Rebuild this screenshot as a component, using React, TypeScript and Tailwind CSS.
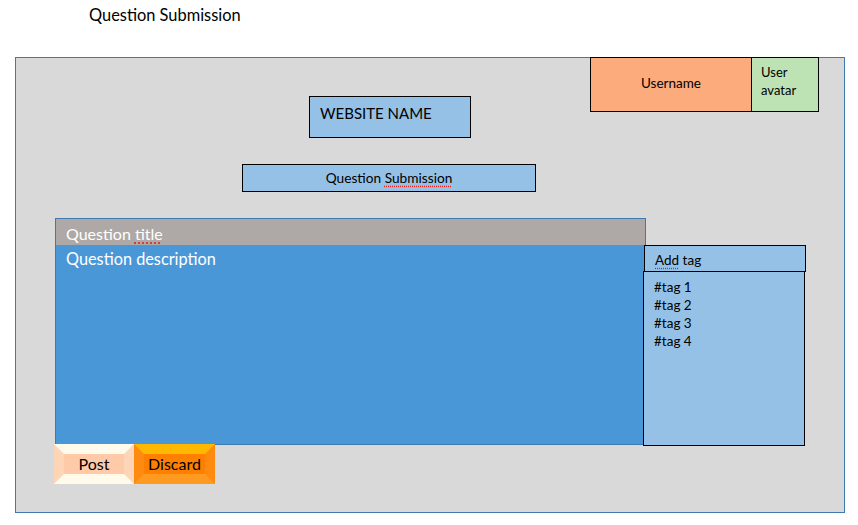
const font = { fontFamily: "Lato, 'Open Sans', sans-serif" };

const spell = "underline decoration-dotted decoration-[#e02020] underline-offset-[3px]";

const tags = ["#tag 1", "#tag 2", "#tag 3", "#tag 4"];

const App = () => {
  return (
    <div className="w-[858px] h-[525px] bg-white text-black" style={font}>
      <div className="pl-[89px] pt-[3px] h-[57px] text-[16.4px]">Question Submission</div>

      <div className="ml-[15px] w-[830px] h-[456px] bg-[#d9d9d9] border border-[#3e79b2]">
        <div className="flex items-start">
          <div className="ml-[293px] mt-[38px] w-[162px] h-[42px] bg-[#95c1e7] border border-black pl-[10px] pt-[5px] text-[15px]">
            WEBSITE NAME
          </div>
          <div className="flex ml-[119px] -mt-px h-[55px]">
            <div className="w-[162px] bg-[#fcac7c] border border-black flex items-center justify-center text-[13.5px] pb-[3px]">
              Username
            </div>
            <div className="w-[67px] bg-[#bde3b4] border border-black border-l-0 pl-[9px] pt-[5px] text-[13px] leading-[18px]">
              User<br />avatar
            </div>
          </div>
        </div>

        <div className="ml-[226px] mt-[26px] w-[294px] h-[28px] bg-[#95c1e7] border border-black flex items-center justify-center text-[13.7px] pt-px">
          <span>Question <span className={spell}>Submission</span></span>
        </div>

        <div className="flex ml-[39px] mt-[26px]">
          <div className="w-[591px]">
            <div className="h-[27px] bg-[#aea9a6] border border-[#3e79b2] border-b-0 pl-[10px] pt-[5px] text-white text-[16px] leading-[20px]">
              Question <span className={spell}>title</span>
            </div>
            <div className="h-[200px] w-[590px] bg-[#4a97d7] border-l border-b border-[#3e79b2] pl-[10px] pt-[3px] text-white text-[16.3px] leading-[22px]">
              Question description
            </div>
            <div className="flex -ml-px -mt-px">
              <div className="w-[80px] h-[40px] border-[10px] border-t-[#fffbec] border-b-[#fffaea] border-l-[#ffd5b8] border-r-[#ffd5b8] bg-[#ffcaa8] flex items-center justify-center text-[16px]">
                Post
              </div>
              <div className="w-[81px] h-[40px] border-[10px] border-t-[#ffb800] border-b-[#ff9a20] border-l-[#ff8a10] border-r-[#ff8a10] bg-[#ff8000] flex items-center justify-center text-[16px]">
                Discard
              </div>
            </div>
          </div>
          <div className="-ml-[3px] mt-[27px]">
            <div className="ml-px w-[162px] h-[27px] bg-[#95c1e7] border border-black pl-[10px] pt-[5px] text-[13.5px] leading-[18px]">
              <span className={spell}>Add</span> tag
            </div>
            <div className="-mt-px w-[162px] h-[175px] bg-[#95c1e7] border border-black pl-[10px] pt-[6px] text-[13.5px] leading-[18px]">
              {tags.map((t) => (
                <div key={t}>{t}</div>
              ))}
            </div>
          </div>
        </div>
      </div>
    </div>
  );
};

export default App;
